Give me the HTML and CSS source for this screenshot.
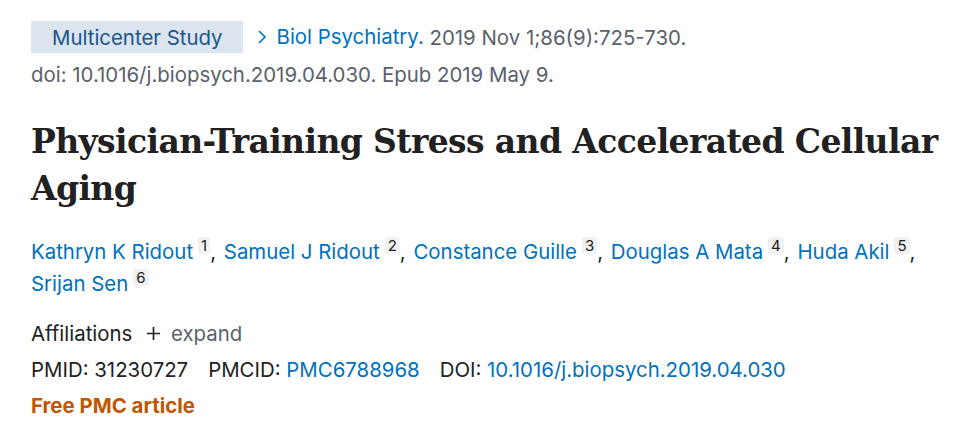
FILE: index.html
```html
<!DOCTYPE html>
<html lang="en">
<head>
<meta charset="utf-8">
<title>Physician-Training Stress and Accelerated Cellular Aging</title>
<link rel="stylesheet" href="styles.css">
</head>
<body>
<main class="article">
  <div class="meta">
    <span class="badge">Multicenter Study</span>
    <span class="cite">
      <a class="journal" href="#"><svg class="chev" viewBox="0 0 10 16" width="10" height="16"><path d="M2 2 L8 8 L2 14" fill="none" stroke="currentColor" stroke-width="1.6"/></svg>Biol Psychiatry.</a>
      <span class="date">2019 Nov 1;86(9):725-730.</span>
    </span>
  </div>
  <div class="doi-line">doi: 10.1016/j.biopsych.2019.04.030. Epub 2019 May 9.</div>
  <h1 class="title">Physician-Training Stress and Accelerated Cellular Aging</h1>
  <div class="authors">
    <span class="author"><a href="#">Kathryn K Ridout</a><sup class="aff">1</sup>,</span>
    <span class="author"><a href="#">Samuel J Ridout</a><sup class="aff">2</sup>,</span>
    <span class="author"><a href="#">Constance Guille</a><sup class="aff">3</sup>,</span>
    <span class="author"><a href="#">Douglas A Mata</a><sup class="aff">4</sup>,</span>
    <span class="author"><a href="#">Huda Akil</a><sup class="aff">5</sup>,</span>
    <span class="author"><a href="#">Srijan Sen</a><sup class="aff">6</sup></span>
  </div>
  <div class="affiliations">Affiliations <span class="expand"><svg class="plus" viewBox="0 0 16 16" width="15" height="15"><path d="M8 1 V15 M1 8 H15" stroke="currentColor" stroke-width="1.8" fill="none"/></svg>expand</span></div>
  <div class="ids">
    <span class="id">PMID: 31230727</span>
    <span class="id">PMCID: <a href="#">PMC6788968</a></span>
    <span class="id">DOI: <a href="#">10.1016/j.biopsych.2019.04.030</a></span>
  </div>
  <div class="free">Free PMC article</div>
</main>
</body>
</html>
```

FILE: styles.css
```css
html, body {
  margin: 0;
  padding: 0;
  background: #ffffff;
}
body {
  font-family: Inter, "Open Sans", "Liberation Sans", sans-serif;
  color: #212121;
}
a {
  color: #0071bc;
  text-decoration: none;
}
.article {
  padding: 21px 20px 0 31px;
}
.meta {
  display: flex;
  align-items: center;
  font-size: 20.4px;
}
.badge {
  display: inline-flex;
  align-items: center;
  height: 32px;
  padding: 0 20px 0 21px;
  background: #dbe4ef;
  color: #20558a;
}
.cite {
  margin-left: 14px;
  color: #5b616b;
}
.journal {
  display: inline-flex;
  align-items: center;
}
.chev {
  margin-right: 10px;
}
.doi-line {
  margin-top: 7px;
  font-size: 20.4px;
  color: #5b616b;
  line-height: 30px;
}
.title {
  margin: 28px 0 0 0;
  font-family: "DejaVu Serif", serif;
  font-weight: bold;
  font-size: 33px;
  letter-spacing: -0.62px;
  line-height: 47px;
  color: #212121;
}
.authors {
  margin-top: 24px;
  font-size: 20.4px;
  line-height: 32px;
  color: #212121;
}
.author {
  margin-right: 2px;
}
.aff {
  display: inline-block;
  vertical-align: 8px;
  margin-left: 5px;
  padding: 0 3px;
  background: #f1f1f1;
  border-radius: 3px;
  color: #212121;
  font-size: 15px;
  line-height: 17px;
}
.affiliations {
  margin-top: 15px;
  font-size: 20.4px;
  line-height: 37px;
}
.expand {
  color: #5b616b;
  margin-left: 8px;
  display: inline-flex;
  align-items: center;
}
.plus {
  margin-right: 10px;
  color: #212121;
}
.ids {
  display: flex;
  gap: 20px;
  font-size: 20.4px;
  line-height: 36px;
}
.free {
  font-size: 20.4px;
  line-height: 36px;
  font-weight: bold;
  color: #c05600;
}
```
